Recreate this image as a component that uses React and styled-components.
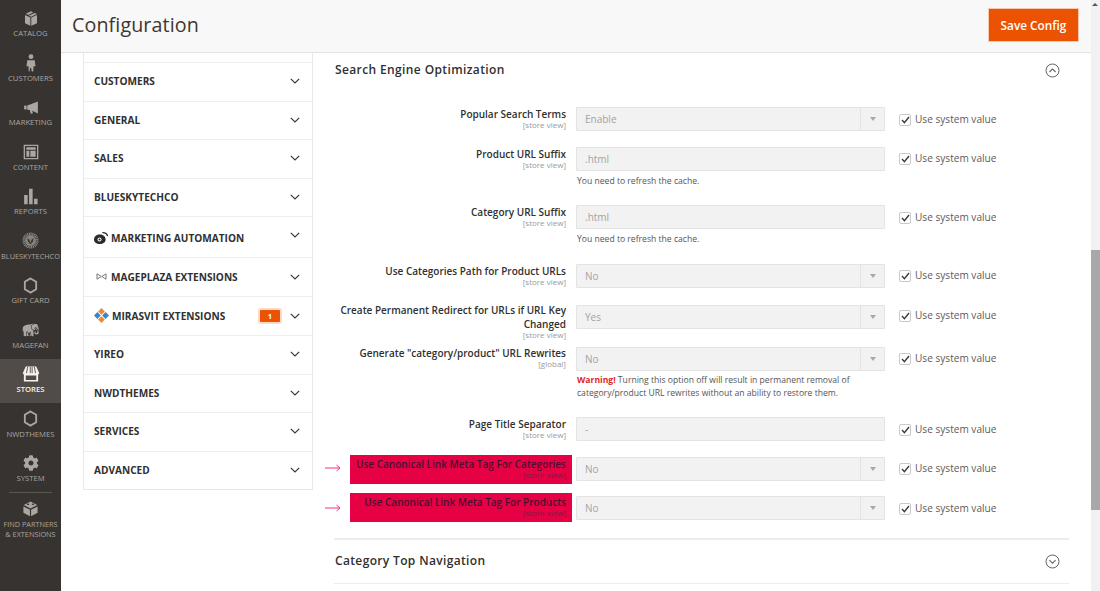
import React from 'react';
import styled, { createGlobalStyle } from 'styled-components';
import { FaCog } from 'react-icons/fa';
import { GiElephant } from 'react-icons/gi';

const Global = createGlobalStyle`
  html, body { margin: 0; padding: 0; height: 100%; overflow: hidden; background: #fff; }
  #root { height: 591px; width: 1100px; }
  * { box-sizing: border-box; }
  body { font-family: "Open Sans", "Liberation Sans", sans-serif; color: #41362f; }
`;

const Page = styled.div`display: flex; width: 1100px; height: 591px; overflow: hidden;`;
const Sidebar = styled.nav`
  width: 61px; flex: none; background: #373330; padding-top: 2.5px;
  display: flex; flex-direction: column;
`;
const SideItem = styled.div`
  height: 44.5px; flex: none; display: flex; flex-direction: column; align-items: center;
  padding-top: 5.5px;
  background: ${p => p.$active ? '#514c48' : 'transparent'};
  color: ${p => p.$active ? '#f7f3eb' : '#aaa6a0'};
`;
const SideIcon = styled.div`
  height: 20px; width: 24px; display: flex; align-items: center; justify-content: center; flex: none;
  svg { display: block; }
`;
const SideLabel = styled.div`
  font-size: ${p => p.$small ? 7.3 : 7.7}px; line-height: 10px; text-transform: uppercase; text-align: center;
  white-space: nowrap; font-weight: ${p => p.$active ? 600 : 400};
`;
const SideRule = styled.div`height: 1px; background: #5a5652; margin: 0 9px; flex: none;`;

const Main = styled.div`flex: 1; min-width: 0; display: flex; flex-direction: column;`;
const Header = styled.header`
  height: 53px; flex: none; background: #f8f8f8; border-bottom: 1px solid #e3e3e3;
  display: flex; align-items: flex-start; justify-content: space-between;
  padding: 8px 12px 0 11px;
`;
const Title = styled.h1`
  margin: 0; font-size: 19.7px; line-height: 33px; font-weight: 400; color: #41362f;
  letter-spacing: 0.1px;
`;
const SaveButton = styled.button`
  width: 91px; height: 34px; background: #eb5202; border: 1px solid #f5c9ae; color: #fff;
  font-family: inherit; font-size: 11.8px; font-weight: 600; padding: 0;
`;
const Body = styled.div`flex: 1; display: flex; padding-left: 22px; gap: 21px; min-height: 0;`;

const NavCol = styled.div`
  width: 230px; flex: none; align-self: flex-start; padding-top: 9px;
  border: 1px solid #e8e8e8; border-top: 0;
`;
const NavRow = styled.div`
  height: ${p => p.$h}px; display: flex; align-items: center;
  border-top: 1.5px solid #eeeeee; padding: 0 12px 1px 10px;
`;
const NavText = styled.span`
  font-size: 10.1px; font-weight: 700; text-transform: uppercase; color: #303030;
  margin-top: ${p => p.$mt || 0}px; display: inline-flex; align-items: center; gap: 3px;
  flex: 1; white-space: nowrap;
`;
const Badge = styled.span`
  width: 20px; height: 12px; background: #eb5202; color: #fff; font-size: 7.5px; font-weight: 700;
  display: flex; align-items: center; justify-content: center; margin-right: 10px;
  box-shadow: 0 0 0 2px #fcd9c6; border-radius: 1px;
`;
const Chevron = styled.svg`
  width: 10px; height: 6px; flex: none; margin-top: ${p => p.$mt || 0}px;
`;

const Content = styled.div`width: 735px; flex: none; display: flex; flex-direction: column;`;
const SectionHead = styled.div`
  height: ${p => p.$h}px; display: flex; align-items: center; justify-content: space-between;
  padding: 0 9px 0 1px; flex: none;
`;
const SectionTitle = styled.h2`
  margin: 0 0 2px; font-size: 12px; font-weight: 600; color: #303030; letter-spacing: ${p => p.$ls}px;
`;
const Form = styled.div`display: flex; flex-direction: column; padding-top: 20px; flex: none;`;
const Row = styled.div`
  height: ${p => p.$h}px; display: grid; flex: none;
  grid-template-columns: 232px 309px auto; column-gap: 10px; align-items: start;
`;
const Label = styled.div`
  text-align: right; position: relative;
  margin-top: ${p => -(p.$lift || 0)}px;
  ${p => p.$hl ? `
    background: #e60044; justify-self: end; width: 222px; height: 29px;
    margin: ${-2 - (p.$lift || 0)}px -6px 0 0; padding: 2px 6px 0 0;
  ` : ''}
`;
const LabelText = styled.div`
  font-size: 10px; line-height: 14px; font-weight: 600; color: ${p => p.$hl ? '#4b1030' : '#303030'};
`;
const Scope = styled.div`
  font-size: 8px; line-height: 9px; margin-top: -1px; color: ${p => p.$hl ? '#7a1f45' : '#999'};
`;
const PointerArrow = styled.svg`
  position: absolute; left: -25px; top: ${p => p.$top}px; width: 16px; height: 8px;
`;
const Control = styled.div`display: flex; flex-direction: column;`;
const Field = styled.div`
  height: 24px; background: #f2f2f2; border: 1px solid #e3e3e3; border-radius: 1px;
  display: flex; align-items: center; padding-left: 8px; color: #a3a3a3; font-size: 10px;
`;
const FieldValue = styled.span`flex: 1;`;
const SelectArrow = styled.span`
  width: 24px; height: 100%; border-left: 1px solid #e3e3e3; display: flex; align-items: center; justify-content: center;
  &::after { content: ''; border: 3.5px solid transparent; border-top: 4px solid #a8a8a8; border-bottom: 0; }
`;
const Note = styled.div`
  font-size: 8.6px; line-height: 13px; color: #555; margin-top: ${p => p.$mt}px; padding-left: 1px;
  b { color: #e22626; font-weight: 700; }
`;
const UseSystem = styled.label`
  display: flex; align-items: center; gap: 4px; margin: ${p => -(p.$lift || 0)}px 0 0 4px; height: 24px;
  font-size: 10.1px; color: #5f5a56;
`;
const Box = styled.span`
  width: 12px; height: 12px; background: #fff; border: 1px solid #c9c9c9; border-radius: 2px;
  display: flex; align-items: center; justify-content: center; flex: none; margin-top: 1px;
`;
const Rule = styled.div`height: ${p => p.$w || 2}px; background: #ececec; flex: none;`;
const Scrollbar = styled.div`
  width: 9px; flex: none; background: #f1f1f1; display: flex; flex-direction: column;
`;
const ScrollSpacer = styled.div`height: 250px; flex: none; position: relative;
  &::after { content: ''; position: absolute; left: 1px; top: 3px; border: 3px solid transparent; border-bottom: 3px solid #555; border-top: 0; }
`;
const ScrollThumb = styled.div`height: 260px; background: #a8a8a8; flex: none;`;

const Ic = ({ w = 16, h = 16, vb = '0 0 24 24', children }) => (
  <svg width={w} height={h} viewBox={vb} fill="currentColor">{children}</svg>
);

const icons = {
  catalog: <Ic w={16} h={17}>
    <path d="M12 1l3.500 1.700L8 6.600 4.200 4.800z" /><path d="M17.400 3.600l3.600 1.700-9 4.200-3.400-1.700z" />
    <path d="M3 6.600l8 3.800V23l-8-4z" /><path d="M21 6.600V19l-8.600 4V10.600z" />
  </Ic>,
  customers: <Ic w={18} h={19}>
    <circle cx="12" cy="4.200" r="3.200" /><path d="M7 9h10l1 8h-2.600l-.4 7h-2l-.9-5h-1.200l-.9 5H9l-.4-7H6z" />
  </Ic>,
  marketing: <Ic w={16} h={15}>
    <path d="M1 9h4v6H1z" /><path d="M6 8.700L23 2.500v19L14 17l1 4-3.400 1-1.600-6-4-.6z" />
  </Ic>,
  content: <Ic w={16} h={16}>
    <path fillRule="evenodd" d="M1 1h22v22H1zM3 3v18h18V3z" />
    <path d="M5 5h14v3.500H5zM5 10h4.500v9H5zM11 10h8v9h-8z" />
  </Ic>,
  reports: <Ic w={17} h={17}>
    <path d="M3 10h5v13H3zM10 1h5v22h-5zM17 15h5v8h-5z" />
  </Ic>,
  bluesky: <Ic w={17} h={17}>
    <circle cx="12" cy="12" r="9.600" fill="none" stroke="currentColor" strokeWidth="3.600" strokeDasharray="1.600 .9" opacity=".7" />
    <circle cx="12" cy="12" r="7.600" opacity=".7" />
    <path d="M7.500 8.500l3 2.500 1.500 5 1.500-5 3-2.500-1 5-3.500 4-3.500-4z" fill="#373330" />
  </Ic>,
  hex: <Ic w={17} h={17}>
    <path d="M12 2l8 4.800v10.400L12 22l-8-4.800V6.800z" fill="none" stroke="currentColor" strokeWidth="2.600" />
  </Ic>,
  magefan: <GiElephant size={18} />,
  stores: <Ic w={18} h={18}>
    <path d="M5 2h14l4 9H1z" fill="#f7f3eb" />
    <path d="M7.500 2.600L6 11M11 2.600V11M13.500 2.600V11M16.500 2.600L18 11" stroke="#514c48" strokeWidth="1.200" />
    <path d="M2.500 11h19v11h-19z" fill="#f7f3eb" /><path d="M5 14h14v6H5z" fill="#514c48" />
    <path d="M1 10.500c1 3 4.400 3 5.500 0 1 3 4.500 3 5.500 0 1 3 4.500 3 5.500 0 1 3 4.500 3 5.500 0z" fill="#f7f3eb" />
  </Ic>,
  system: <FaCog size={16} />,
  partners: <Ic w={17} h={17}>
    <path d="M12 2l9.500 5-9.500 5-9.500-5z" />
    <path d="M2 9l9.200 4.600V23L2 18zM22 9v9l-9.200 5v-9.400z" />
    <ellipse cx="8.500" cy="6" rx="1.800" ry="1" fill="#373330" /><ellipse cx="15.500" cy="6" rx="1.800" ry="1" fill="#373330" />
  </Ic>,
};

const sideItems = [
  { icon: 'catalog', label: 'Catalog' }, { icon: 'customers', label: 'Customers' },
  { icon: 'marketing', label: 'Marketing' }, { icon: 'content', label: 'Content' },
  { icon: 'reports', label: 'Reports' }, { icon: 'bluesky', label: 'BlueSkyTechCo', small: true },
  { icon: 'hex', label: 'Gift Card' }, { icon: 'magefan', label: 'Magefan' },
  { icon: 'stores', label: 'Stores', active: true }, { icon: 'hex', label: 'NWDThemes' },
  { icon: 'system', label: 'System' },
];

const ChevronIcon = ({ mt }) => (
  <Chevron $mt={mt} viewBox="0 0 10 6"><path d="M.8.8L5 5l4.200-4.200" fill="none" stroke="#41362f" strokeWidth="1.200" /></Chevron>
);

const MarketingAutomationLogo = () => (
  <svg width="14" height="12" viewBox="0 0 14 12">
    <path d="M0 7.500C0 4.500 2.500 2.500 5.800 2.500s5.800 2 5.800 5c0 2.800-2.500 4.500-5.800 4.500S0 10.300 0 7.500z" fill="#2b2b2b" />
    <circle cx="5.500" cy="7.500" r="2" fill="#fff" /><circle cx="5.500" cy="7.500" r="1" fill="#2b2b2b" />
    <path d="M8.400.7c2.400-.2 4.500 1.300 5.200 3.400" fill="none" stroke="#2b2b2b" strokeWidth="1.300" />
  </svg>
);
const MageplazaLogo = () => (
  <svg width="11" height="7" viewBox="0 0 11 7" style={{ margin: '0 1px 0 2px' }}>
    <path d="M1 .8v5.400L5.200 3.500zM10 .8v5.400L5.800 3.500z" fill="none" stroke="#777" strokeWidth="1" />
  </svg>
);
const MirasvitLogo = () => (
  <svg width="15" height="15" viewBox="0 0 15 15">
    <path d="M7.500 0l3.400 3.400-3.400 3.400-3.400-3.400z" fill="#ef8a2c" />
    <path d="M3.400 4.100l3.400 3.400-3.400 3.400L0 7.500z" fill="#3a85c6" />
    <path d="M11.600 4.100L15 7.500l-3.400 3.400-3.400-3.400z" fill="#3a85c6" />
    <path d="M7.500 8.200l3.400 3.400L7.500 15l-3.400-3.400z" fill="#ef8a2c" />
  </svg>
);

const navRows = [
  { h: 38.5, t: 'Customers' }, { h: 38.5, t: 'General' }, { h: 38.5, t: 'Sales' }, { h: 38.5, t: 'BlueSkyTechCo' },
  { h: 41, t: 'Marketing Automation', logo: <MarketingAutomationLogo />, mt: 3, cmt: -3 },
  { h: 39.4, t: 'Mageplaza Extensions', logo: <MageplazaLogo /> },
  { h: 38.9, t: 'Mirasvit Extensions', logo: <MirasvitLogo />, badge: 1 },
  { h: 38.3, t: 'Yireo' }, { h: 38.7, t: 'NWDThemes' }, { h: 38.3, t: 'Services' }, { h: 38.4, t: 'Advanced' },
];

const CircleChevron = ({ up }) => (
  <svg width="15" height="15" viewBox="0 0 15 15">
    <circle cx="7.500" cy="7.500" r="6.500" fill="none" stroke="#666" strokeWidth="1" />
    <path d={up ? 'M4.400 9l3.100-3 3.100 3' : 'M4.400 6.200l3.100 3 3.100-3'} fill="none" stroke="#666" strokeWidth="1.100" />
  </svg>
);

const fields = [
  { h: 40, label: 'Popular Search Terms', scope: '[store view]', value: 'Enable', select: true },
  { h: 58, label: 'Product URL Suffix', scope: '[store view]', value: '.html', note: 'You need to refresh the cache.', sys: 1 },
  { h: 59, label: 'Category URL Suffix', scope: '[store view]', value: '.html', note: 'You need to refresh the cache.' },
  { h: 41, label: 'Use Categories Path for Product URLs', scope: '[store view]', value: 'No', select: true, sys: 1 },
  { h: 42, label: 'Create Permanent Redirect for URLs if URL Key Changed', scope: '[store view]', value: 'Yes', select: true, lift: 2, sys: 2 },
  { h: 70, label: 'Generate "category/product" URL Rewrites', scope: '[global]', value: 'No', select: true, warning: true, lift: 1, sys: 1 },
  { h: 40, label: 'Page Title Separator', scope: '[store view]', value: '-' },
  { h: 39, label: 'Use Canonical Link Meta Tag For Categories', scope: '[store view]', value: 'No', select: true, hl: true, arrowTop: 9, sys: 1 },
  { h: 42, label: 'Use Canonical Link Meta Tag For Products', scope: '[store view]', value: 'No', select: true, hl: true, lift: 1, arrowTop: 11 },
];

export default function App() {
  return (
    <Page>
      <Global />
      <Sidebar>
        {sideItems.map((s, i) => (
          <SideItem key={i} $active={s.active}>
            <SideIcon>{icons[s.icon]}</SideIcon>
            <SideLabel $active={s.active} $small={s.small}>{s.label}</SideLabel>
          </SideItem>
        ))}
        <SideRule />
        <SideItem>
          <SideIcon>{icons.partners}</SideIcon>
          <SideLabel $small>Find Partners<br />&amp; Extensions</SideLabel>
        </SideItem>
      </Sidebar>
      <Main>
        <Header>
          <Title>Configuration</Title>
          <SaveButton>Save Config</SaveButton>
        </Header>
        <Body>
          <NavCol>
            {navRows.map(r => (
              <NavRow key={r.t} $h={r.h}>
                <NavText $mt={r.mt}>{r.logo}{r.t}</NavText>
                {r.badge && <Badge>{r.badge}</Badge>}
                <ChevronIcon mt={r.cmt} />
              </NavRow>
            ))}
          </NavCol>
          <Content>
            <SectionHead $h={34}>
              <SectionTitle $ls={0.38}>Search Engine Optimization</SectionTitle>
              <CircleChevron up />
            </SectionHead>
            <Form>
              {fields.map(f => (
                <Row key={f.label} $h={f.h}>
                  <Label $hl={f.hl} $lift={f.lift}>
                    {f.hl && (
                      <PointerArrow $top={f.arrowTop} viewBox="0 0 16 8">
                        <path d="M0 4h15M11.500 1l3.500 3-3.500 3" fill="none" stroke="#f5357a" strokeWidth="1" />
                      </PointerArrow>
                    )}
                    <LabelText $hl={f.hl}>{f.label}</LabelText>
                    <Scope $hl={f.hl}>{f.scope}</Scope>
                  </Label>
                  <Control>
                    <Field>
                      <FieldValue>{f.value}</FieldValue>
                      {f.select && <SelectArrow />}
                    </Field>
                    {f.note && <Note $mt={4}>{f.note}</Note>}
                    {f.warning && (
                      <Note $mt={3}>
                        <b>Warning!</b> Turning this option off will result in permanent removal of category/product URL rewrites without an ability to restore them.
                      </Note>
                    )}
                  </Control>
                  <UseSystem $lift={f.sys}>
                    <Box>
                      <svg width="9" height="8" viewBox="0 0 9 8"><path d="M1 4l2.400 2.600L8 1" fill="none" stroke="#41362f" strokeWidth="1.400" /></svg>
                    </Box>
                    Use system value
                  </UseSystem>
                </Row>
              ))}
            </Form>
            <Rule />
            <SectionHead $h={43}>
              <SectionTitle $ls={0.35}>Category Top Navigation</SectionTitle>
              <CircleChevron />
            </SectionHead>
            <Rule $w={1} />
          </Content>
        </Body>
      </Main>
      <Scrollbar>
        <ScrollSpacer />
        <ScrollThumb />
      </Scrollbar>
    </Page>
  );
}
